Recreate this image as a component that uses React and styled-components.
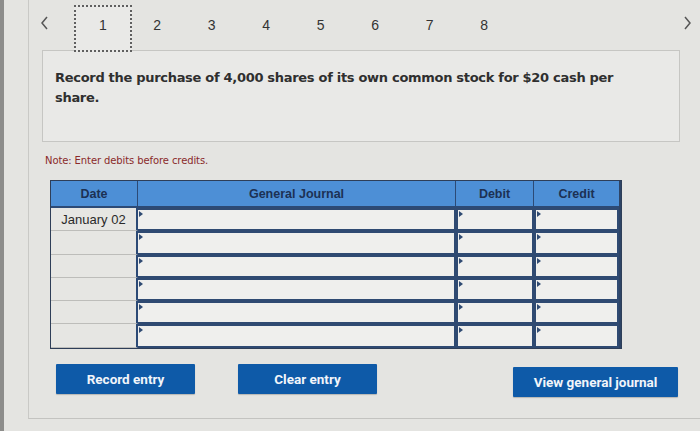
import React from 'react';
import styled, { createGlobalStyle } from 'styled-components';

const GlobalStyle = createGlobalStyle`
  html, body {
    margin: 0;
    padding: 0;
    background: #e4e4e1;
  }
`;

const Page = styled.div`
  width: 700px;
  height: 431px;
  box-sizing: border-box;
  border-left: 4px solid #8d8d8b;
  background: #e4e4e1;
  font-family: "DejaVu Sans", Verdana, sans-serif;
  overflow: hidden;
`;

const Panel = styled.div`
  margin-left: 24px;
  height: 419px;
  box-sizing: border-box;
  border-left: 1px solid #c9c9c6;
  border-bottom: 1px solid #c3c3c0;
  display: flex;
  flex-direction: column;
`;

const Nav = styled.div`
  display: flex;
  align-items: flex-start;
  height: 50px;
  padding-top: 5px;
  box-sizing: border-box;
`;

const Arrow = styled.div`
  width: ${(p) => p.$w}px;
  height: 36px;
  display: flex;
  align-items: center;
  justify-content: center;
`;

const NavItem = styled.div`
  position: relative;
  z-index: ${(p) => (p.$active ? 2 : 0)};
  width: ${(p) => (p.$active ? 58 : 54.5)}px;
  height: 47px;
  box-sizing: border-box;
  display: flex;
  justify-content: center;
  padding-top: ${(p) => (p.$active ? 10 : 12)}px;
  font-family: "Liberation Sans", Arial, sans-serif;
  font-size: 14px;
  color: #333;
  border: ${(p) => (p.$active ? '2px dotted #5f5f5f' : 'none')};
  background: ${(p) => (p.$active ? '#e9e9e7' : 'transparent')};
  margin: ${(p) => (p.$active ? '0 -2px 0 -2px' : '0')};
`;

const Spacer = styled.div`
  flex: ${(p) => (p.$w ? `0 0 ${p.$w}px` : 1)};
`;

const Question = styled.div`
  margin-left: 13px;
  width: 638px;
  height: 92px;
  box-sizing: border-box;
  border: 1px solid #c6c6c3;
  background: #e9e9e7;
  padding: 17px 60px 0 12px;
  font-size: 13px;
  font-weight: bold;
  line-height: 20px;
  color: #2f2f2f;
  letter-spacing: -0.3px;
`;

const Note = styled.div`
  margin: 13px 0 0 16px;
  font-size: 10px;
  color: #8a2a2a;
  letter-spacing: -0.1px;
`;

const Table = styled.div`
  margin: 14px 0 0 21px;
  width: 570px;
  display: grid;
  grid-template-columns: 87px 318px 78px 85px;
  border: 1px solid #2e3e58;
  background: #2e4466;
`;

const Head = styled.div`
  height: 25px;
  display: flex;
  align-items: center;
  justify-content: center;
  background: #4d8fd6;
  border-right: ${(p) => (p.$last ? 'none' : '1px solid #2c4a76')};
  border-bottom: 2px solid #2c4a76;
  font-family: "Liberation Sans", Arial, sans-serif;
  font-weight: bold;
  font-size: 12.5px;
  color: #1c3154;
`;

const DateCell = styled.div`
  height: 23.3px;
  box-sizing: border-box;
  display: flex;
  align-items: center;
  justify-content: center;
  background: #e6e6e3;
  border-bottom: 1px solid #bdbdba;
  border-right: 2px solid #2c4a76;
  font-family: "Liberation Sans", Arial, sans-serif;
  font-size: 13px;
  color: #2a2a2a;
`;

const InputCell = styled.div`
  position: relative;
  height: 23.3px;
  box-sizing: border-box;
  background: #efefed;
  border: 2px solid #2f4a72;
  border-left-width: ${(p) => (p.$first ? 0 : 2)}px;

  &::before {
    content: '';
    position: absolute;
    left: 1px;
    top: 1px;
    border-top: 3px solid transparent;
    border-bottom: 3px solid transparent;
    border-left: 4px solid #2f4a72;
  }
`;

const Buttons = styled.div`
  display: flex;
  align-items: flex-start;
  margin-top: 15px;
  padding-left: 27px;
`;

const Button = styled.button`
  width: ${(p) => p.$w}px;
  height: 30px;
  margin-left: ${(p) => p.$ml}px;
  margin-top: ${(p) => p.$mt || 0}px;
  border: none;
  border-radius: 1px;
  background: #0e5aa8;
  color: #f2f5fa;
  font-family: Roboto, "Liberation Sans", sans-serif;
  font-weight: bold;
  font-size: 13.5px;
  box-shadow: 0 1px 1px rgba(0, 0, 0, 0.2);
`;

function Chevron({ dir }) {
  const points = dir === 'left' ? '8,3 3,9 8,15' : '3,3 8,9 3,15';
  return (
    <svg width="11" height="18" viewBox="0 0 11 18">
      <polyline points={points} fill="none" stroke="#555" strokeWidth="1.5" />
    </svg>
  );
}

const rows = ['January 02', '', '', '', '', ''];
const pages = [1, 2, 3, 4, 5, 6, 7, 8];

export default function App() {
  return (
    <Page>
      <GlobalStyle />
      <Panel>
        <Nav>
          <Arrow $w={30}>
            <Chevron dir="left" />
          </Arrow>
          <Spacer $w={17} />
          {pages.map((n) => (
            <NavItem key={n} $active={n === 1}>
              {n}
            </NavItem>
          ))}
          <Spacer />
          <Arrow $w={26}>
            <Chevron dir="right" />
          </Arrow>
        </Nav>
        <Question>
          Record the purchase of 4,000 shares of its own common stock for $20 cash per share.
        </Question>
        <Note>Note: Enter debits before credits.</Note>
        <Table>
          <Head>Date</Head>
          <Head>General Journal</Head>
          <Head>Debit</Head>
          <Head $last>Credit</Head>
          {rows.map((d, i) => (
            <React.Fragment key={i}>
              <DateCell>{d}</DateCell>
              <InputCell $first />
              <InputCell />
              <InputCell />
            </React.Fragment>
          ))}
        </Table>
        <Buttons>
          <Button $w={139} $ml={0}>Record entry</Button>
          <Button $w={139} $ml={43}>Clear entry</Button>
          <Button $w={165} $ml={136} $mt={3}>View general journal</Button>
        </Buttons>
      </Panel>
    </Page>
  );
}
